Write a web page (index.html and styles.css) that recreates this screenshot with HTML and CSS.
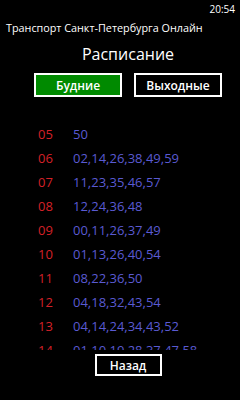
FILE: index.html
```html
<!DOCTYPE html>
<html>
<head>
<meta charset="utf-8">
<link rel="stylesheet" href="styles.css">
</head>
<body>
<div class="screen">
  <div class="status"><span class="time">20:54</span></div>
  <div class="apptitle">Транспорт Санкт-Петербурга Онлайн</div>
  <div class="main">
    <div class="heading">Расписание</div>
    <div class="tabs">
      <div class="btn btn-active">Будние</div>
      <div class="btn">Выходные</div>
    </div>
    <div class="list">
      <div class="row"><span class="hour">05</span><span class="mins">50</span></div>
      <div class="row"><span class="hour">06</span><span class="mins">02,14,26,38,49,59</span></div>
      <div class="row"><span class="hour">07</span><span class="mins">11,23,35,46,57</span></div>
      <div class="row"><span class="hour">08</span><span class="mins">12,24,36,48</span></div>
      <div class="row"><span class="hour">09</span><span class="mins">00,11,26,37,49</span></div>
      <div class="row"><span class="hour">10</span><span class="mins">01,13,26,40,54</span></div>
      <div class="row"><span class="hour">11</span><span class="mins">08,22,36,50</span></div>
      <div class="row"><span class="hour">12</span><span class="mins">04,18,32,43,54</span></div>
      <div class="row"><span class="hour">13</span><span class="mins">04,14,24,34,43,52</span></div>
      <div class="row"><span class="hour">14</span><span class="mins">01,10,19,28,37,47,58</span></div>
    </div>
    <div class="footer">
      <div class="btn btn-back">Назад</div>
    </div>
  </div>
</div>
</body>
</html>
```
FILE: styles.css
```css
html, body {
  margin: 0;
  padding: 0;
  background: #000;
}
.screen {
  width: 240px;
  height: 400px;
  overflow: hidden;
  background: #000;
  color: #fff;
  font-family: "Open Sans", "Noto Sans", sans-serif;
}
.status {
  height: 16px;
  padding-top: 2px;
  box-sizing: border-box;
  display: flex;
  justify-content: flex-end;
  align-items: center;
  padding-right: 5px;
}
.time {
  font-size: 10px;
  line-height: 14px;
}
.apptitle {
  padding-left: 6px;
  font-size: 10.8px;
  line-height: 14px;
  margin-top: 5px;
  white-space: nowrap;
}
.main {
  padding-left: 16px;
  display: flex;
  flex-direction: column;
  align-items: center;
}
.heading {
  font-size: 16px;
  line-height: 22px;
  margin-top: 8px;
}
.tabs {
  display: flex;
  gap: 12px;
  margin-top: 8px;
}
.btn {
  box-sizing: border-box;
  border: 2px solid #fff;
  height: 24px;
  width: 88px;
  display: flex;
  align-items: center;
  justify-content: center;
  font-size: 12px;
  font-weight: 600;
}
.btn-active {
  background: #008a00;
}
.list {
  align-self: stretch;
  height: 228px;
  margin-top: 25px;
  overflow: hidden;
  padding-left: 22px;
}
.row {
  display: flex;
  height: 24px;
  align-items: center;
  font-size: 13px;
}
.hour {
  width: 35px;
  color: #d42128;
}
.mins {
  color: #5a5ad2;
}
.footer {
  margin-top: 4px;
}
.btn-back {
  width: 67px;
  height: 22px;
}
```
